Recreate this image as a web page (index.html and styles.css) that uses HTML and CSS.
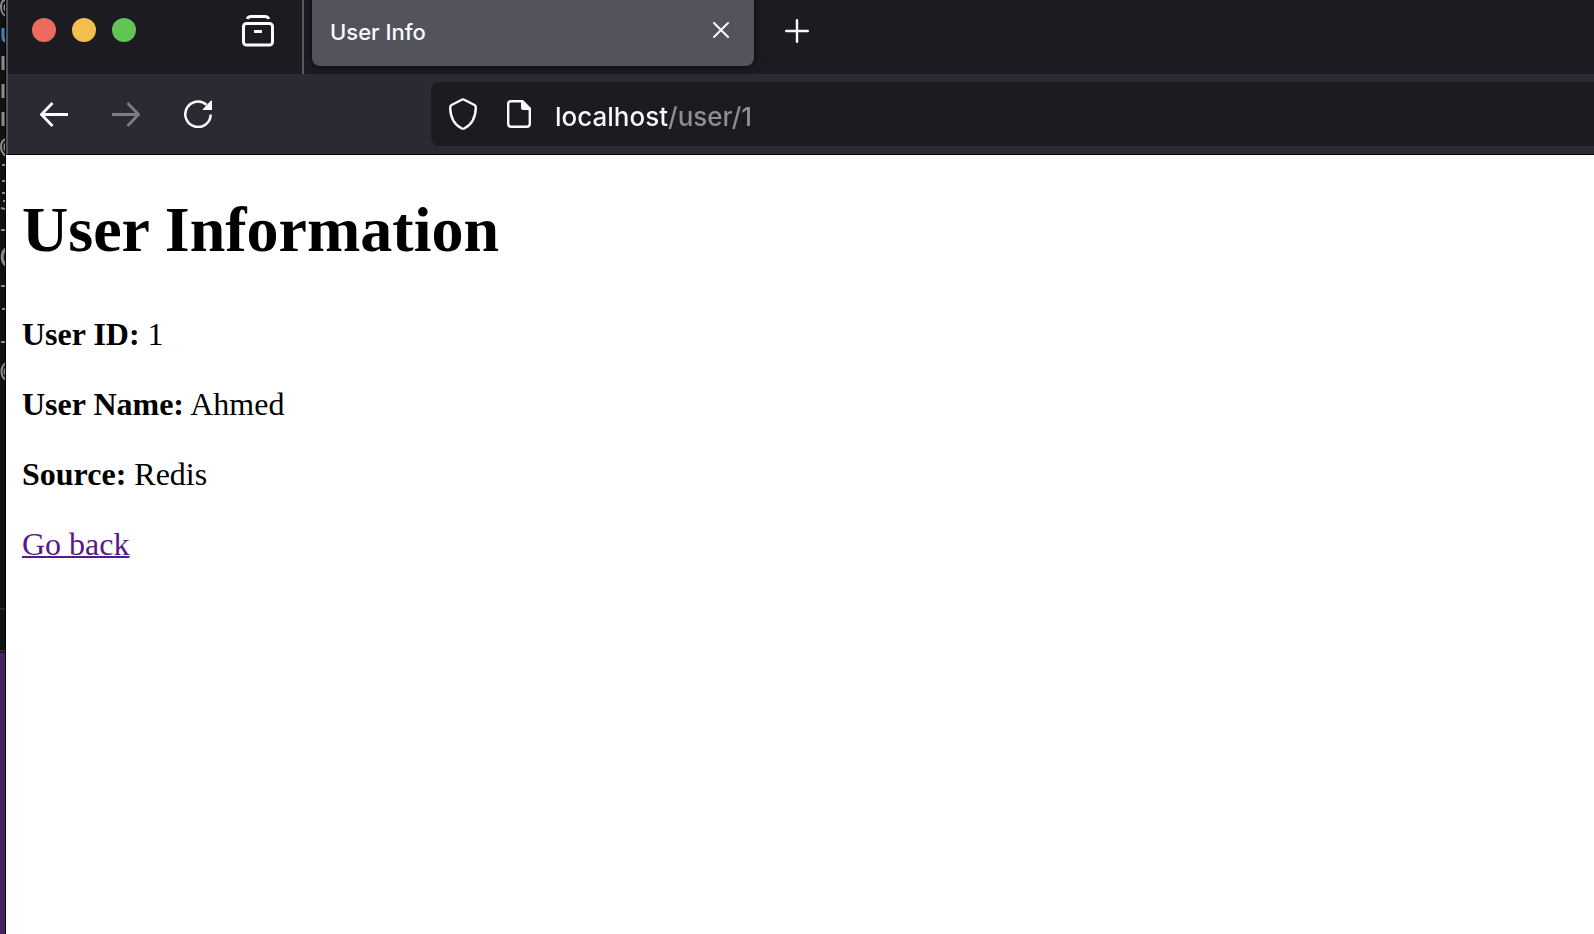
FILE: index.html
```html
<!DOCTYPE html>
<html lang="en">
<head>
<meta charset="utf-8">
<title>User Info</title>
<link rel="stylesheet" href="styles.css">
</head>
<body>
<div class="desktop">
  <aside class="backdrop" aria-hidden="true">
    <div class="terminal">
      <svg class="terminal-glyphs" width="5" height="620" viewBox="0 0 5 620" fill="none" stroke="#8c8c8c" stroke-width="2">
        <path d="M6 0C2 0 1 3 1 7S3 15 6 16M6 4C4 5 4 10 6 11"/>
        <path d="M3 28V37Q3 41 6 41" stroke="#4d7cc4" stroke-width="3"/>
        <path d="M3 56V70M3 84V98M3 112V126" stroke-width="3"/>
        <path d="M6 139C2 140 1 143 1 147S3 154 6 156M6 143C4 144 4 150 6 151"/>
        <path d="M2 165H5M2 181H5M2 193H5M3 201H5M1 208L5 209M1 230H5M1 286H5M2 309H5M1 342H5"/>
        <path d="M6 249C1 252 1 262 6 265" stroke-width="3"/>
        <path d="M6 363C0 366 0 377 6 380M6 368C4 370 4 374 6 375"/>
        <path d="M0 609H5" stroke="#2c2c2c"/>
      </svg>
    </div>
    <div class="wallpaper"></div>
  </aside>
  <div class="window">
    <header class="chrome">
      <div class="tabbar">
        <div class="controls">
          <div class="lights">
            <button class="light close" aria-label="Close window"></button>
            <button class="light minimize" aria-label="Minimize window"></button>
            <button class="light maximize" aria-label="Zoom window"></button>
          </div>
          <button class="icon-button" aria-label="Firefox View">
            <svg width="32" height="32" viewBox="0 0 32 32" fill="none" stroke="#fbfbfe" stroke-width="3">
              <path d="M5.500 4Q6 1.500 9 1.500H23Q26 1.500 26.500 4"/>
              <rect x="1.500" y="8.500" width="29" height="21.500" rx="3"/>
              <path d="M12 16.500H20"/>
            </svg>
          </button>
        </div>
        <div class="tab">
          <span class="tab-title">User Info</span>
          <button class="icon-button" aria-label="Close tab">
            <svg width="18" height="18" viewBox="0 0 18 18" fill="none" stroke="#fbfbfe" stroke-width="2" stroke-linecap="round"><path d="M2 2L16 16M16 2L2 16"/></svg>
          </button>
        </div>
        <button class="icon-button new-tab" aria-label="New tab">
          <svg width="24" height="24" viewBox="0 0 24 24" fill="none" stroke="#fbfbfe" stroke-width="2.400" stroke-linecap="round"><path d="M12 1.200V22.800M1.200 12H22.800"/></svg>
        </button>
      </div>
      <div class="toolbar">
        <nav class="nav-buttons" aria-label="History">
          <button class="icon-button" aria-label="Back">
            <svg width="28" height="28" viewBox="0 0 28 28" fill="none" stroke="#fbfbfe" stroke-width="2.800"><path d="M28 14.500H2M12.500 3L1.500 14.500L12.500 26" /></svg>
          </button>
          <button class="icon-button" aria-label="Forward" disabled>
            <svg width="28" height="28" viewBox="0 0 28 28" fill="none" stroke="#7d7c82" stroke-width="2.800"><path d="M0 14.500H26M15.500 3L26.500 14.500L15.500 26"/></svg>
          </button>
          <button class="icon-button" aria-label="Reload">
            <svg width="28" height="28" viewBox="0 0 28 28" fill="none" stroke="#fbfbfe" stroke-width="2.500"><path d="M26.700 14.500A12.700 12.700 0 1 1 22.500 4.800"/><path d="M28 1V10H19Q18 10 19 9L26.500 1Q28 0 28 1Z" fill="#fbfbfe" stroke="none"/></svg>
          </button>
        </nav>
        <form class="urlbar">
          <button class="icon-button" type="button" aria-label="Tracking protection">
            <svg width="28" height="32" viewBox="1 0 28 32" fill="none" stroke="#fbfbfe" stroke-width="2.400" stroke-linejoin="round"><path d="M13.800 1.700Q15 1 16.200 1.700L26.500 7Q28 8 27.800 10C27.500 19 24 26.500 16.500 30.300Q15 31 13.500 30.300C6 26.500 2.500 19 2.200 10Q2 8 3.500 7Z"/></svg>
          </button>
          <button class="icon-button" type="button" aria-label="Site information">
            <svg width="24" height="28" viewBox="0 0 24 28" fill="none" stroke="#fbfbfe" stroke-width="2.400"><path d="M15 1.200H4.200Q1.200 1.200 1.200 4.200V23.800Q1.200 26.800 4.200 26.800H19.800Q22.800 26.800 22.800 23.800V9"/><path d="M14 0H16L24 8V10H16Q14 10 14 8Z" fill="#fbfbfe" stroke="none"/></svg>
          </button>
          <input class="url" type="text" value="localhost/user/1" aria-label="Address" spellcheck="false">
        </form>
      </div>
    </header>
    <main class="page">
      <h1>User Information</h1>
      <p><strong>User ID:</strong> 1</p>
      <p><strong>User Name:</strong> Ahmed</p>
      <p><strong>Source:</strong> Redis</p>
      <a href="#">Go back</a>
    </main>
  </div>
</div>
</body>
</html>
```

FILE: styles.css
```css
* { box-sizing: border-box; }
body { margin: 0; background: #fff; }
.desktop { display: flex; min-height: 100vh; }
.backdrop { display: flex; flex-direction: column; width: 6px; border-right: 1px solid #000; }
.terminal { height: 652px; background: #111; border-bottom: 2px solid #2c2c2c; overflow: hidden; }
.terminal-glyphs { display: block; }
.wallpaper { flex: 1; background: #45245f; border-top: 1px solid #21112e; }
.window { flex: 1; min-width: 0; background: #fff; }
.chrome { border-left: 2px solid #535258; border-bottom: 1px solid #08070b; background: #2b2a33; font-family: Inter, sans-serif; }
button { margin: 0; padding: 0; border: 0; background: none; }
.icon-button { display: flex; flex: none; }
.tabbar { display: flex; height: 74px; background: #1c1b22; }
.controls { display: flex; justify-content: space-between; width: 296px; padding: 15px 28px 0 24px; border-right: 2px solid #57565c; }
.lights { display: flex; gap: 16px; padding-top: 3px; }
.light { width: 24px; height: 24px; border-radius: 50%; }
.close { background: #ed6a5e; }
.minimize { background: #f5bf4f; }
.maximize { background: #61c554; }
.tab { display: flex; align-items: center; justify-content: space-between; width: 442px; height: 66px; margin-left: 8px; padding: 0 24px 6px 18px; border-radius: 0 0 8px 8px; background: #54525d; box-shadow: 0 0 6px #0b0a0f; color: #fbfbfe; }
.tab-title { padding-top: 4px; font-size: 22px; font-weight: 500; line-height: 28px; }
.new-tab { align-self: flex-start; margin: 19px 0 0 31px; }
.toolbar { display: flex; align-items: center; height: 80px; }
.nav-buttons { display: flex; gap: 44px; width: 423px; padding-left: 32px; }
.urlbar { display: flex; flex: 1; align-items: center; height: 64px; padding-left: 18px; border-radius: 8px 0 0 8px; background: #1c1b22; }
.urlbar .icon-button + .icon-button { margin-left: 30px; }
.url { flex: 1; min-width: 0; height: 44px; margin-left: 24px; padding: 4px 0 0; border: 0; outline: 0; font-family: Inter, sans-serif; font-size: 26px; font-weight: 500; line-height: 40px; color: transparent; background: linear-gradient(to right, #fbfbfe 113px, #8f8e94 113px); -webkit-background-clip: text; background-clip: text; }
.page { padding: 0 16px; font-family: "Liberation Serif", "Times New Roman", serif; font-size: 32px; line-height: 38px; color: #000; }
.page h1 { margin: 38px 0 48px; font-size: 64px; line-height: 74px; }
.page p { margin: 0 0 32px; }
.page a { color: #551a8b; text-decoration-thickness: 2px; }
```
